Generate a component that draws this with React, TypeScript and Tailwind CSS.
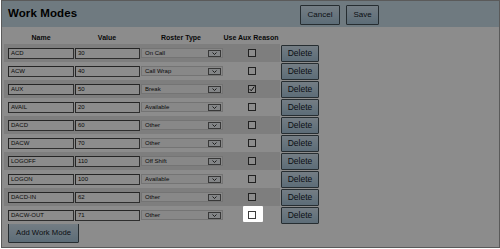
import React from 'react';

type Mode = { name: string; value: string; roster: string; aux: boolean };

const modes: Mode[] = [
  { name: 'ACD', value: '30', roster: 'On Call', aux: false },
  { name: 'ACW', value: '40', roster: 'Call Wrap', aux: false },
  { name: 'AUX', value: '50', roster: 'Break', aux: true },
  { name: 'AVAIL', value: '20', roster: 'Available', aux: false },
  { name: 'DACD', value: '60', roster: 'Other', aux: false },
  { name: 'DACW', value: '70', roster: 'Other', aux: false },
  { name: 'LOGOFF', value: '110', roster: 'Off Shift', aux: false },
  { name: 'LOGON', value: '100', roster: 'Available', aux: false },
  { name: 'DACD-IN', value: '62', roster: 'Other', aux: false },
  { name: 'DACW-OUT', value: '71', roster: 'Other', aux: false },
];

const btn =
  'block bg-gradient-to-b from-[#d3e4f0] to-[#a9c6da] border border-[#46525a] text-[#142028] rounded-[1px] leading-none';

const Checkbox = ({ checked }: { checked: boolean }) => (
  <span className="w-[8px] h-[8px] border border-[#3c3c3c] bg-white flex items-center justify-center">
    {checked && (
      <svg width="8" height="8" viewBox="0 0 8 8">
        <path d="M1 4.2 L3 6.4 L7 0.8" stroke="#111" strokeWidth="1.3" fill="none" />
      </svg>
    )}
  </span>
);

const App = () => {
  return (
    <div className="w-[500px] h-[249px] overflow-hidden bg-white font-['Liberation_Sans',Arial,sans-serif]">
      <div className="relative ml-[1px] w-[499px] h-[248px] border border-[#5a5a5a] overflow-hidden">
        {/* Header */}
        <div className="h-[26px] bg-[#cadee9] flex items-center pl-[6px]">
          <h1 className="w-[292px] text-[11.5px] font-bold text-black tracking-[0.1px]">Work Modes</h1>
          <div className="flex gap-[6px] pt-[1px]">
            <button className={`${btn} w-[40px] h-[20px] text-[8px]`}>Cancel</button>
            <button className={`${btn} w-[33px] h-[20px] text-[8px]`}>Save</button>
          </div>
        </div>

        {/* Table */}
        <div className="pl-[2px] pt-[7px]">
          <div className="flex h-[9px] items-center text-[7px] font-bold text-[#111] w-[276px]">
            <span className="w-[70px] text-center pl-[4px]">Name</span>
            <span className="w-[66px] text-center">Value</span>
            <span className="w-[82px] text-center">Roster Type</span>
            <span className="w-[58px] text-center">Use Aux Reason</span>
          </div>
          <div className="mt-[1px]">
            {modes.map((m, i) => (
              <div key={m.name} className="flex items-center h-[18px]">
                <div
                  className={`flex items-center h-[18px] w-[276px] pl-[4px] ${
                    i % 2 === 0 ? 'bg-[#e6e6e6]' : 'bg-white'
                  }`}
                >
                  <span className="w-[66px] h-[11px] border border-[#555] border-t-[#444] border-l-[#444] bg-white text-[6px] leading-[9px] pl-[2px] text-[#111]">
                    {m.name}
                  </span>
                  <span className="ml-[1px] w-[65px] h-[11px] border border-[#555] border-t-[#444] border-l-[#444] bg-white text-[6px] leading-[9px] pl-[2px] text-[#111]">
                    {m.value}
                  </span>
                  <span className="ml-[1px] w-[82px] h-[10px] bg-[#f7f7f7] border border-[#d4d4d4] flex items-center justify-between text-[6px] pl-[3px] text-[#111]">
                    {m.roster}
                    <span className="w-[13px] h-[7px] mr-[1px] border border-[#666] bg-[#eef2f6] flex items-center justify-center">
                      <svg width="5" height="3" viewBox="0 0 5 3">
                        <path d="M0.5 0.5 L2.5 2.5 L4.5 0.5" stroke="#222" strokeWidth="0.9" fill="none" />
                      </svg>
                    </span>
                  </span>
                  <span className="relative ml-[25px] flex items-center">
                    <Checkbox checked={m.aux} />
                    {i === modes.length - 1 && (
                      <span className="absolute left-[-5px] top-[-5px] w-[20px] h-[16px] rounded-[1px] shadow-[0_0_0_9999px_rgba(0,0,0,0.45)] z-10" />
                    )}
                  </span>
                </div>
                <button className={`${btn} ml-[1px] w-[38px] h-[17px] text-[8.5px]`}>Delete</button>
              </div>
            ))}
          </div>
          <button className={`${btn} ml-[4px] mt-[-1px] w-[71px] h-[20px] text-[7.7px]`}>Add Work Mode</button>
        </div>
      </div>
    </div>
  );
};

export default App;
